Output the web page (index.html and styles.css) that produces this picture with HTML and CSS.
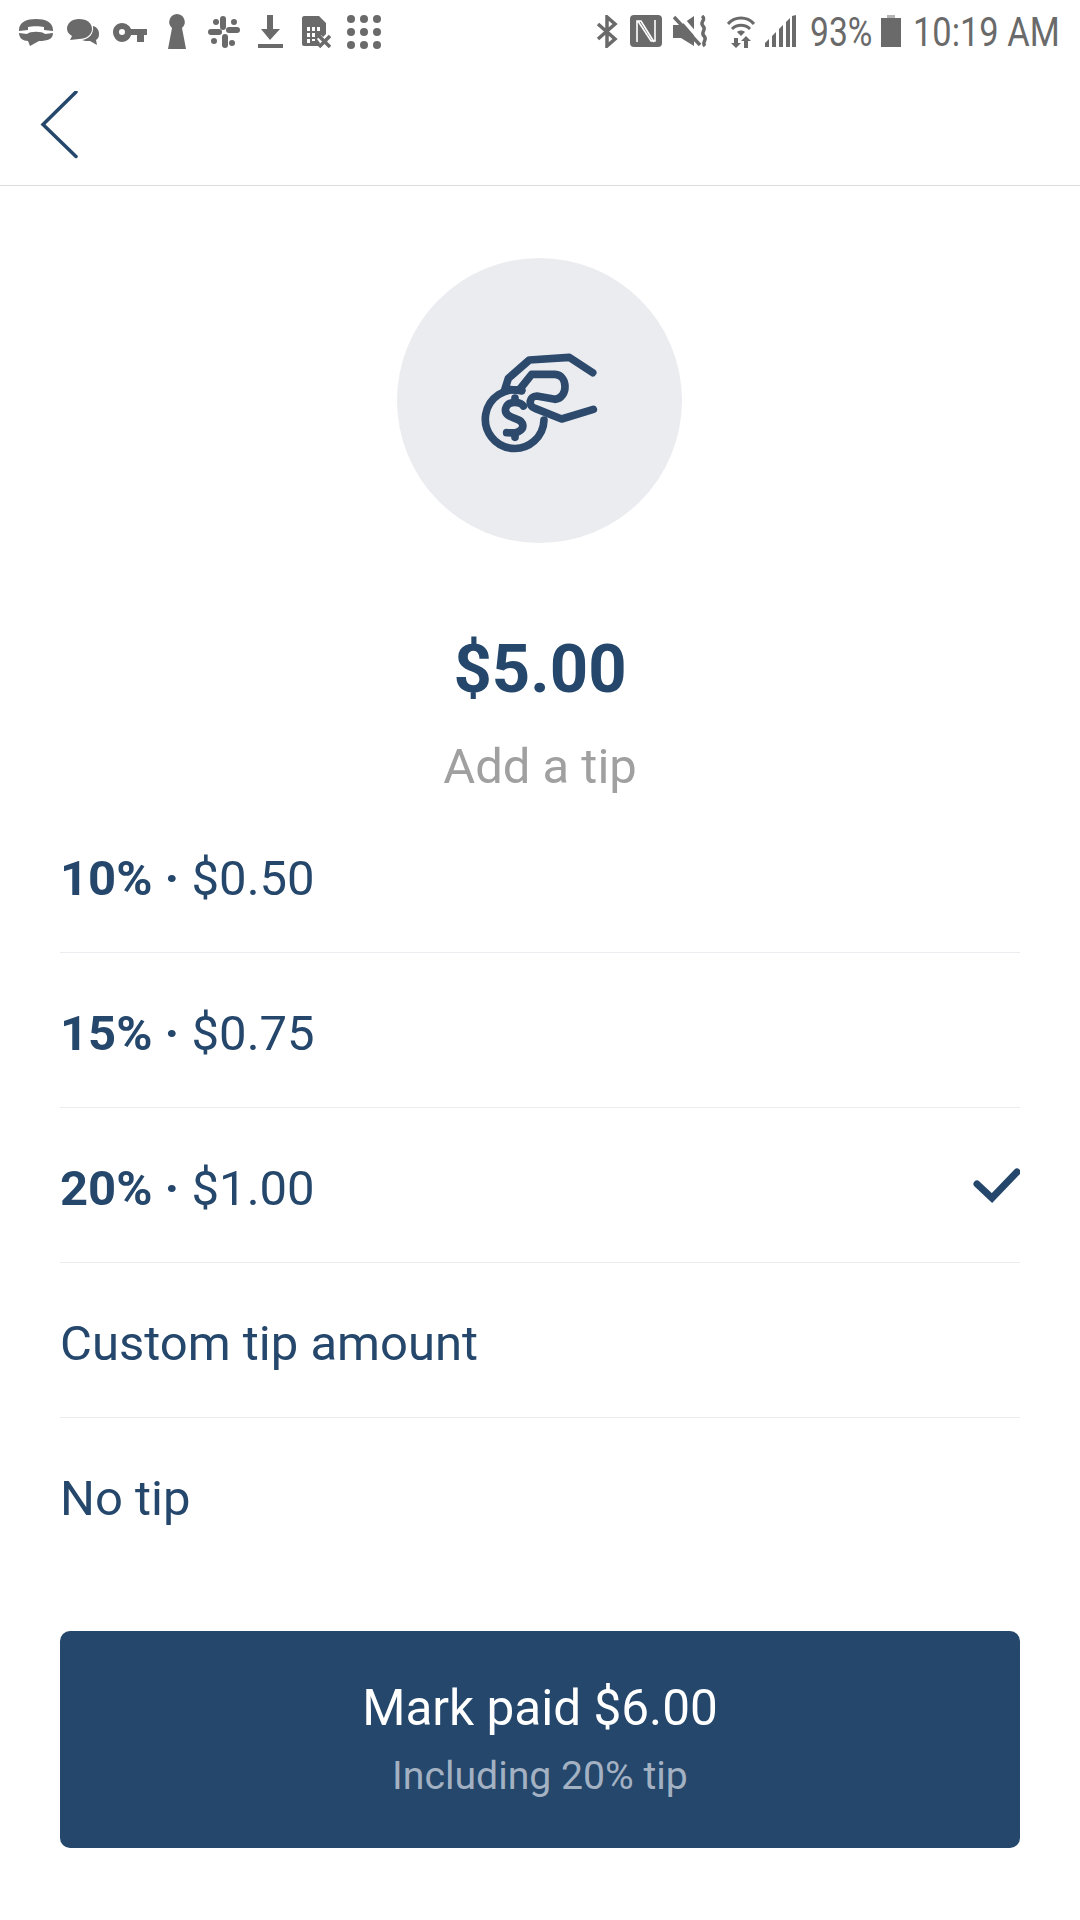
FILE: index.html
```html
<!DOCTYPE html>
<html lang="en">
<head>
    <meta charset="UTF-8">
    <title>Add a tip</title>
    <meta name="viewport" content="width=device-width, initial-scale=1.0">
    <link rel="stylesheet" href="styles.css">
</head>
<body>

    <div class="status-bar">
        <div class="status-left">
            <svg class="ic" width="36" height="28" viewBox="0 0 36 28"><path d="M1 12C1 4 9 1 18 1s17 3 17 11v1l-9-1V9C22 8 14 8 10 9v3l-9 1z"/><path d="M1 15l8 1c3-3 15-3 18 0l8-1c0 6-5 8-14 8l-9 5-2-5c-5 0-9-3-9-8z"/></svg>
            <svg class="ic" width="34" height="27" viewBox="0 0 34 27"><path d="M13 1c8 0 13 4 13 10 0 6-6 10-13 10l-9 1 2-4c-3-2-5-4-5-7C1 5 6 1 13 1z"/><path d="M27 8c4 1 6 4 6 8 0 3-1 5-3 6l1 5-7-4c-3 0-6 0-8-1 7-1 12-6 11-14z"/></svg>
            <svg class="ic" width="36" height="21" viewBox="0 0 36 21"><path fill-rule="evenodd" d="M10 1c4 0 8 3 9 6h16v6h-3v7h-7v-7h-6c-1 4-5 7-9 7C5 20 1 15 1 10S5 1 10 1zm0 6a3 3 0 1 0 0 6 3 3 0 0 0 0-6z"/></svg>
            <svg class="ic" width="20" height="36" viewBox="0 0 20 36"><path d="M10 0a8 8 0 0 1 5 14l4 21H1L5 14A8 8 0 0 1 10 0z"/></svg>
            <svg class="ic" width="32" height="32" viewBox="0 0 32 32"><rect x="12" y="0" width="6" height="14" rx="3"/><rect x="0" y="13" width="14" height="6" rx="3"/><rect x="18" y="11" width="14" height="6" rx="3"/><rect x="14" y="18" width="6" height="14" rx="3"/><circle cx="8" cy="6" r="3"/><circle cx="26" cy="6" r="3"/><circle cx="6" cy="25" r="3"/><circle cx="24" cy="27" r="3"/></svg>
            <svg class="ic" width="25" height="33" viewBox="0 0 25 33"><path d="M9 0h6v14h7L12 25 3 14h6zM0 29h25v4H0z"/></svg>
            <svg class="ic" width="29" height="32" viewBox="0 0 29 32"><path fill-rule="evenodd" d="M2 0h15l7 7v11l-3 3-2-2-4 4 3 4-1 3H2c-1 0-2-1-2-2V2C0 1 1 0 2 0zm3 11v4h3v-4zm5 0v4h3v-4zm5 0v4h3v-4zM5 17v4h3v-4zm5 0v4h3v-4zM5 23v4h3v-4zm5 0v2h3v-2z"/><path d="M17 20l11 11M28 20L17 31" class="ic-line"/></svg>
            <svg class="ic" width="36" height="36" viewBox="0 0 36 36"><circle cx="5" cy="5" r="4"/><circle cx="18" cy="5" r="4"/><circle cx="31" cy="5" r="4"/><circle cx="5" cy="18" r="4"/><circle cx="18" cy="18" r="4"/><circle cx="31" cy="18" r="4"/><circle cx="5" cy="31" r="4"/><circle cx="18" cy="31" r="4"/><circle cx="31" cy="31" r="4"/></svg>
        </div>
        <div class="status-right">
            <svg class="ic bluetooth" width="22" height="33" viewBox="0 0 22 33"><path class="ic-line" d="M2 9l17 15-8 7V2l8 7L2 24"/></svg>
            <svg class="ic nfc" width="32" height="32" viewBox="0 0 32 32"><rect width="32" height="32" rx="4"/><path class="nfc-n" d="M7 27V6h4l13 21M25 5v21h-4L8 6"/></svg>
            <svg class="ic mute" width="36" height="33" viewBox="0 0 36 33"><path d="M0 10h8L21 1v30L8 23H0z"/><path class="mute-gap" d="M6 0l25 29"/><path class="ic-line" d="M1 2l26 28M29 1c5 4-3 6 1 10s-3 6 1 10-3 6 1 10"/></svg>
            <svg class="ic wifi" width="28" height="33" viewBox="0 0 28 33"><path class="ic-thin" d="M1 9C8 1 20 1 27 9M5 14c5-5 13-5 18 0"/><path d="M10 17c2-2 6-2 8 0l-4 4zM7 23h4v5h3l-5 5-5-5h3zM19 21l5 5h-3v7h-4v-7h-3z"/></svg>
            <svg class="ic signal" width="32" height="32" viewBox="0 0 32 32"><path d="M0 28l4-4v8H0zM7 21l4-4v15H7zM14 14l4-4v22h-4zM21 7l4-4v29h-4zM27 1l4-1v32h-4z"/></svg>
            <span class="status-text pct">93%</span>
            <svg class="ic battery" width="20" height="32" viewBox="0 0 20 32"><path class="battery-cap" d="M6 0h8v3H6z"/><path d="M0 3h20v29H0z"/></svg>
            <span class="status-text clock">10:19 AM</span>
        </div>
    </div>

    <div class="nav-bar">
        <svg class="back" width="40" height="70" viewBox="0 0 40 70"><path d="M36 1L3 33.5l33 32"/></svg>
    </div>

    <div class="content">
        <div class="coin-circle">
            <svg class="coin-icon" width="200" height="170" viewBox="0 0 600 510">
                <path d="M458 158L388 112 268 120 205 175 195 207 245 212"/>
                <path d="M240 207L275 163H345C385 165 385 235 345 238L290 228C268 228 262 258 285 265L365 297 460 268"/>
                <path d="M245 212A88 88 0 1 0 312 300"/>
                <path d="M250 258C244 246 205 240 197 265C192 285 215 292 232 298C252 305 255 326 235 335C222 341 205 338 200 338"/>
                <path d="M225 234V245M225 340V352"/>
            </svg>
        </div>

        <div class="amount">$5.00</div>
        <div class="subtitle">Add a tip</div>

        <ul class="tip-list">
            <li class="tip-row"><span><b>10%</b> <b class="dot">·</b> $0.50</span></li>
            <li class="tip-row"><span><b>15%</b> <b class="dot">·</b> $0.75</span></li>
            <li class="tip-row"><span><b>20%</b> <b class="dot">·</b> $1.00</span>
                <svg class="check" width="48" height="36" viewBox="0 0 48 36"><path d="M5 17l15 14L45 5"/></svg>
            </li>
            <li class="tip-row"><span>Custom tip amount</span></li>
            <li class="tip-row"><span>No tip</span></li>
        </ul>

        <div class="pay-button">
            <div class="pay-title">Mark paid $6.00</div>
            <div class="pay-sub">Including 20% tip</div>
        </div>
    </div>

</body>
</html>
```

FILE: styles.css
```css
* {
    box-sizing: border-box;
}

body {
    margin: 0;
    width: 1080px;
    height: 1920px;
    overflow: hidden;
    font-family: Roboto, "Liberation Sans", sans-serif;
    background-color: #fff;
    color: #24476b;
}

.status-bar {
    height: 64px;
    padding: 14px 22px 0 18px;
    display: flex;
    justify-content: space-between;
    align-items: flex-start;
}

.status-left,
.status-right {
    display: flex;
    align-items: flex-start;
}

.status-left {
    gap: 12px;
}

.status-left .ic:nth-child(1) { margin-top: 4px; }
.status-left .ic:nth-child(2) { margin-top: 4px; }
.status-left .ic:nth-child(3) { margin-top: 8px; margin-right: 7px; }
.status-left .ic:nth-child(4) { margin-right: 9px; }
.status-left .ic:nth-child(5) { margin-top: 2px; margin-right: 6px; }
.status-left .ic:nth-child(6) { margin-top: 1px; margin-right: 7px; }
.status-left .ic:nth-child(7) { margin-top: 2px; margin-right: 3px; }

.status-right {
    gap: 10px;
    margin-top: 1px;
}

.bluetooth { margin-right: 2px; }
.nfc { margin-right: 1px; }
.mute { margin-right: 8px; }
.signal { margin-right: 3px; }
.battery { margin-right: 2px; }

.ic {
    fill: #6a6a6a;
    display: block;
    flex: none;
}

.ic-line {
    fill: none;
    stroke: #6a6a6a;
    stroke-width: 3.5;
}

.ic-thin {
    fill: none;
    stroke: #6a6a6a;
    stroke-width: 3;
}

.nfc-n {
    fill: none;
    stroke: #fff;
    stroke-width: 1.6;
}

.mute-gap {
    fill: none;
    stroke: #fff;
    stroke-width: 4;
}

.battery-cap {
    fill: #b5b5b5;
}

.status-text {
    margin-top: 2px;
    font-size: 40px;
    line-height: 32px;
    color: #6a6a6a;
    white-space: nowrap;
    height: 32px;
    transform-origin: left center;
    transform: scaleX(0.86);
}

.pct {
    width: 61px;
    transform: scaleX(0.84);
}

.clock {
    width: 145px;
}

.nav-bar {
    height: 122px;
    padding: 27px 0 0 40px;
    border-bottom: 1px solid #dcdcdc;
}

.back {
    display: block;
    fill: none;
    stroke: #24476b;
    stroke-width: 3.5;
    stroke-linecap: round;
}

.content {
    padding: 72px 60px 0;
    display: flex;
    flex-direction: column;
}

.coin-circle {
    width: 285px;
    height: 285px;
    border-radius: 50%;
    background-color: #ebecf0;
    align-self: center;
    margin-right: 2px;
    display: flex;
    align-items: center;
    justify-content: center;
}

.coin-icon {
    display: block;
    margin-top: 8px;
    margin-left: 2px;
    fill: none;
    stroke: #2d4a6d;
    stroke-width: 23;
    stroke-linecap: round;
    stroke-linejoin: round;
}

.amount {
    margin-top: 87px;
    text-align: center;
    font-size: 67px;
    line-height: 78px;
    font-weight: 700;
}

.subtitle {
    margin-top: 31px;
    text-align: center;
    font-size: 49px;
    line-height: 56px;
    color: #a0a0a0;
}

.tip-list {
    list-style: none;
    margin: 3px 0 58px;
    padding: 0;
}

.tip-row {
    height: 155px;
    padding-top: 6px;
    display: flex;
    align-items: center;
    justify-content: space-between;
    font-size: 49px;
    border-bottom: 1px solid #ebedf0;
}

.tip-row:last-child {
    border-bottom: none;
}

.check {
    display: block;
    margin-bottom: 6px;
    fill: none;
    stroke: #24476b;
    stroke-width: 7;
    stroke-linecap: round;
}

.pay-button {
    height: 217px;
    padding-top: 47px;
    background-color: #24476b;
    border-radius: 10px;
    display: flex;
    flex-direction: column;
    align-items: center;
}

.pay-title {
    color: #fff;
    font-size: 49.5px;
    line-height: 60px;
}

.pay-sub {
    margin-top: 16px;
    color: #a3b1c2;
    font-size: 39.2px;
    line-height: 44px;
}
```
